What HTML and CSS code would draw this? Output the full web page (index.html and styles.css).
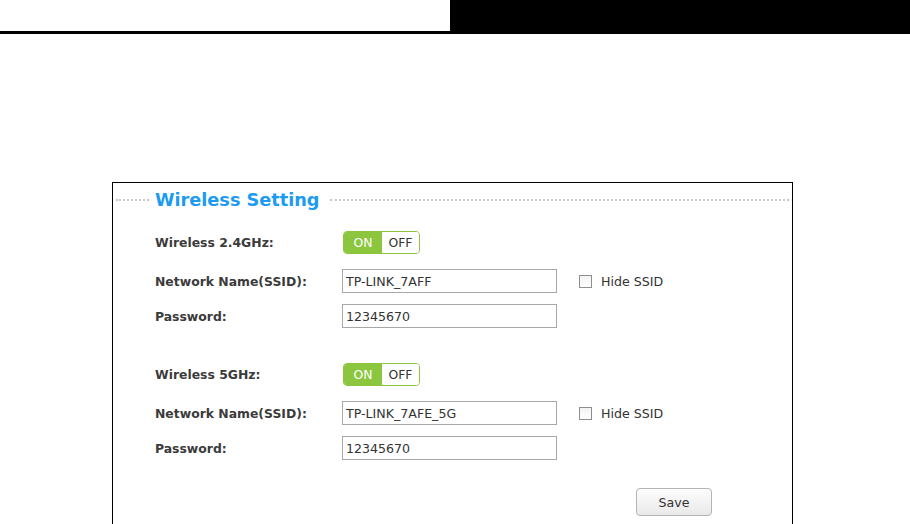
FILE: index.html
```html
<!DOCTYPE html>
<html lang="en">
<head>
  <meta charset="UTF-8">
  <title>Wireless Setting</title>
  <link rel="stylesheet" href="styles.css">
</head>
<body>

  <!-- Top bar -->
  <div class="topbar">
    <div class="topbar-left"></div>
    <div class="topbar-right"></div>
  </div>

  <!-- Wireless panel -->
  <div class="panel">
    <div class="legend">
      <span class="rule rule-short"></span>
      <h2 class="legend-title">Wireless Setting</h2>
      <span class="rule rule-long"></span>
    </div>

    <!-- 2.4GHz band -->
    <div class="band">
      <div class="row row-toggle">
        <label class="field-label">Wireless 2.4GHz:</label>
        <div class="toggle">
          <span class="toggle-on">ON</span>
          <span class="toggle-off">OFF</span>
        </div>
      </div>
      <div class="row row-ssid">
        <label class="field-label">Network Name(SSID):</label>
        <input class="text-input" type="text" value="TP-LINK_7AFF">
        <label class="check"><span class="check-box"></span>Hide SSID</label>
      </div>
      <div class="row row-pass">
        <label class="field-label">Password:</label>
        <input class="text-input" type="text" value="12345670">
      </div>
    </div>

    <!-- 5GHz band -->
    <div class="band band-second">
      <div class="row row-toggle">
        <label class="field-label">Wireless 5GHz:</label>
        <div class="toggle">
          <span class="toggle-on">ON</span>
          <span class="toggle-off">OFF</span>
        </div>
      </div>
      <div class="row row-ssid">
        <label class="field-label">Network Name(SSID):</label>
        <input class="text-input" type="text" value="TP-LINK_7AFE_5G">
        <label class="check"><span class="check-box"></span>Hide SSID</label>
      </div>
      <div class="row row-pass">
        <label class="field-label">Password:</label>
        <input class="text-input" type="text" value="12345670">
      </div>
    </div>

    <div class="actions">
      <button class="save-button">Save</button>
    </div>
  </div>

</body>
</html>
```

FILE: styles.css
```css
/* General body styles */
body {
  margin: 0;
  padding: 0;
  background: #fff;
  font-family: 'DejaVu Sans', Verdana, sans-serif;
  color: #333;
  overflow: hidden;
}

/* Top bar */
.topbar {
  display: flex;
  height: 34px;
}

.topbar-left {
  width: 450px;
  height: 31px;
  border-bottom: 3px solid #000;
}

.topbar-right {
  flex: 1;
  background: #000;
}

/* Panel */
.panel {
  width: 679px;
  height: 360px;
  margin: 148px 0 0 112px;
  border: 1px solid #000;
  box-sizing: content-box;
}

.legend {
  display: flex;
  align-items: center;
  height: 33px;
  padding: 0 3px 0 3px;
}

.rule {
  height: 0;
  border-top: 2px dotted #c8c8c8;
}

.rule-short {
  width: 33px;
}

.rule-long {
  flex: 1;
}

.legend-title {
  margin: 0 10px 0 6px;
  font-size: 17.7px;
  font-weight: bold;
  color: #1d9bf0;
}

/* Form rows */
.band {
  margin-top: 15px;
  padding-left: 42px;
}

.band-second {
  margin-top: 35px;
}

.row {
  display: flex;
  align-items: center;
}

.row-toggle {
  height: 23px;
}

.row-ssid {
  height: 24px;
  margin-top: 15px;
}

.row-pass {
  height: 24px;
  margin-top: 11px;
}

.field-label {
  width: 187px;
  font-size: 12.4px;
  font-weight: bold;
  color: #3b3b3b;
}

/* ON/OFF switch */
.toggle {
  display: flex;
  height: 21px;
  margin-left: 1px;
  border: 1px solid #8cc63f;
  border-radius: 4px;
  overflow: hidden;
  font-size: 12.4px;
}

.toggle-on {
  width: 38px;
  background: #8cc63f;
  color: #fff;
  line-height: 21px;
  text-align: center;
}

.toggle-off {
  width: 37px;
  background: #fff;
  color: #333;
  line-height: 21px;
  text-align: center;
}

/* Text inputs */
.text-input {
  width: 210px;
  height: 22px;
  margin: 0;
  padding: 0 0 0 3px;
  border: 1px solid #a8a8a8;
  box-sizing: content-box;
  font-family: 'DejaVu Sans', Verdana, sans-serif;
  font-size: 12.6px;
  color: #333;
  background: #fff;
}

/* Hide SSID checkbox */
.check {
  display: flex;
  align-items: center;
  margin-left: 22px;
  font-size: 12.6px;
  color: #333;
}

.check-box {
  width: 11px;
  height: 11px;
  margin-right: 9px;
  border: 1px solid #8e8e8e;
  background: linear-gradient(#f3f3f3, #fff);
}

/* Save button */
.actions {
  display: flex;
  justify-content: flex-end;
  padding-right: 80px;
  margin-top: 28px;
}

.save-button {
  width: 76px;
  height: 28px;
  border: 1px solid #b4b4b4;
  border-radius: 4px;
  background: linear-gradient(#fdfdfd, #e9e9e9);
  font-family: 'DejaVu Sans', Verdana, sans-serif;
  font-size: 12.6px;
  color: #333;
}
```
